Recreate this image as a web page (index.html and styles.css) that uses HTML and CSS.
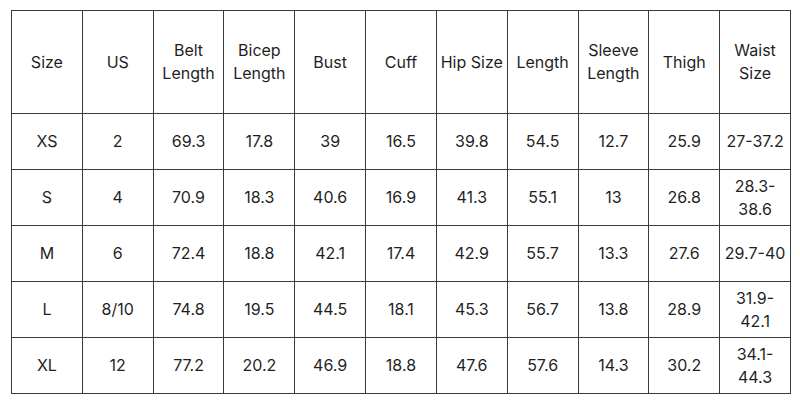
FILE: index.html
```html
<!DOCTYPE html>
<html>
<head>
<meta charset="utf-8">
<link rel="stylesheet" href="styles.css">
</head>
<body>
<table class="size-chart">
  <thead>
    <tr class="head-row">
      <th>Size</th><th>US</th><th>Belt<br>Length</th><th>Bicep<br>Length</th><th>Bust</th><th>Cuff</th><th>Hip Size</th><th>Length</th><th>Sleeve<br>Length</th><th>Thigh</th><th>Waist<br>Size</th>
    </tr>
  </thead>
  <tbody>
    <tr><td>XS</td><td>2</td><td>69.3</td><td>17.8</td><td>39</td><td>16.5</td><td>39.8</td><td>54.5</td><td>12.7</td><td>25.9</td><td>27-37.2</td></tr>
    <tr><td>S</td><td>4</td><td>70.9</td><td>18.3</td><td>40.6</td><td>16.9</td><td>41.3</td><td>55.1</td><td>13</td><td>26.8</td><td>28.3-<br>38.6</td></tr>
    <tr><td>M</td><td>6</td><td>72.4</td><td>18.8</td><td>42.1</td><td>17.4</td><td>42.9</td><td>55.7</td><td>13.3</td><td>27.6</td><td>29.7-40</td></tr>
    <tr><td>L</td><td>8/10</td><td>74.8</td><td>19.5</td><td>44.5</td><td>18.1</td><td>45.3</td><td>56.7</td><td>13.8</td><td>28.9</td><td>31.9-<br>42.1</td></tr>
    <tr><td>XL</td><td>12</td><td>77.2</td><td>20.2</td><td>46.9</td><td>18.8</td><td>47.6</td><td>57.6</td><td>14.3</td><td>30.2</td><td>34.1-<br>44.3</td></tr>
  </tbody>
</table>
</body>
</html>
```
FILE: styles.css
```css
html, body {
  margin: 0;
  background: #ffffff;
}
body {
  padding: 10px 0 0 11px;
  font-family: "Inter", "Lato", sans-serif;
  color: #1f1f1f;
}
.size-chart {
  border-collapse: collapse;
  table-layout: fixed;
  width: 780px;
}
.size-chart th,
.size-chart td {
  border: 1px solid #3a3a3a;
  padding: 0;
  text-align: center;
  vertical-align: middle;
  font-weight: 400;
  font-size: 16px;
  line-height: 23px;
  white-space: nowrap;
}
.head-row th {
  height: 102px;
}
.size-chart td {
  height: 55px;
}
```
